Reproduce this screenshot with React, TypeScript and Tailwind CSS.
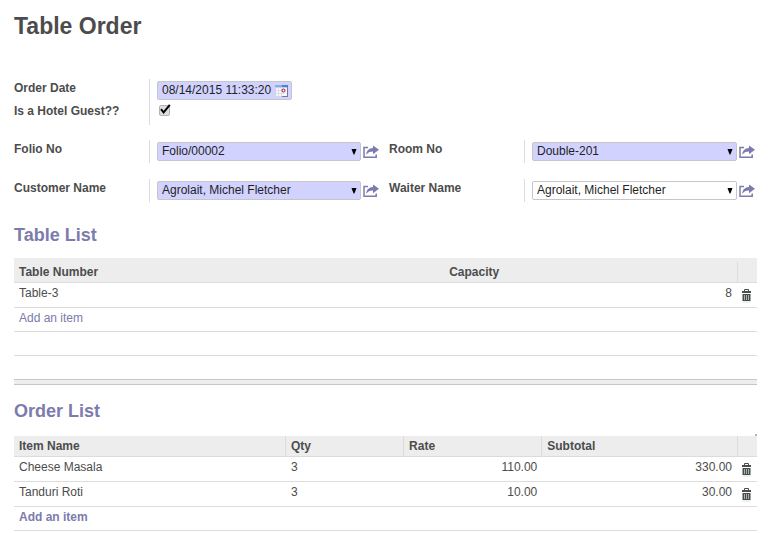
import { useState } from "react";
import type { ReactNode } from "react";

function ShareIcon() {
  return (
    <svg viewBox="0 0 16 13" className="block h-[13px] w-4" aria-hidden="true">
      <path d="M5 2.6H1v9.6h12.2V9.6" fill="none" stroke="#7c7bad" strokeWidth="1.5" />
      <path d="M3.2 9.8C3.6 5.6 5.8 3.2 10 3V.5L16 4.8 10 9.2V6.4C6.8 6.4 4.8 7.6 3.2 9.8z" fill="#7c7bad" />
    </svg>
  );
}

function TrashIcon() {
  return (
    <svg viewBox="0 0 9 12" className="block h-3 w-[9px]" aria-hidden="true">
      <path d="M2.5 2V.5h4V2" fill="none" stroke="#4c4c4c" />
      <path d="M0 2h9v2H0z" fill="#4c4c4c" />
      <path d="M.5 5h8v7h-8z" fill="#4c4c4c" />
      <path d="M2.5 6v5M4.5 6v5M6.5 6v5" stroke="#9fb4b8" />
    </svg>
  );
}

function CalendarIcon() {
  return (
    <svg viewBox="0 0 13 12" className="block h-3 w-[13px]" aria-hidden="true">
      <path d="M0 0h13v12H0z" fill="#f6f7fa" />
      <path d="M.5 3v8.5H12" fill="none" stroke="#d3d5de" />
      <path d="M3.5 3v8M6.5 3v8M1 5.5h8M1 8.5h8" stroke="#dddfe6" />
      <path d="M0 0h13v2.5H0z" fill="#86aeea" />
      <path d="M7 0h6v2H7z" fill="#4a80d8" />
      <path d="M12.5 2v10M7 11.5h6" stroke="#6c7ca6" />
      <circle cx="8.5" cy="5.5" r="1.5" fill="#fff" stroke="#c4303c" strokeWidth="1.1" />
    </svg>
  );
}

function Field({ id, label, children }: { id: string; label: string; children: ReactNode }) {
  return (
    <div className="flex h-[23px]">
      <label htmlFor={id} className="w-[135px] shrink-0 pt-px font-bold">
        {label}
      </label>
      <div className="flex min-w-0 flex-1 items-start border-l border-[#dcdcdc] pt-0.5 pl-[7px]">{children}</div>
    </div>
  );
}

function SelectField({ id, label, value, required = false }: { id: string; label: string; value: string; required?: boolean }) {
  return (
    <Field id={id} label={label}>
      <div className="relative min-w-0 flex-1">
        <select
          id={id}
          className={`block h-[19px] w-full appearance-none rounded-xs border border-[#c6c6c6] px-1 pb-0.5 leading-4 text-[#1f1f1f] ${
            required ? "bg-[#d2d2ff]" : "bg-white"
          }`}
        >
          <option>{value}</option>
        </select>
        <svg viewBox="0 0 6 6" className="pointer-events-none absolute top-[7px] right-1 size-1.5" aria-hidden="true">
          <path d="M.5 0h5L3.4 5.5h-.8z" fill="#000" />
        </svg>
      </div>
      <button type="button" aria-label={`Open ${label}`} className="ml-0.5 pt-[3px]">
        <ShareIcon />
      </button>
    </Field>
  );
}

function DeleteCell() {
  return (
    <td className="border-b border-[#dcdcdc] pt-1.5 pl-[5px] align-top">
      <button type="button" aria-label="Delete" className="block rounded-xs shadow-[0_2px_1px_#eeeeee]">
        <TrashIcon />
      </button>
    </td>
  );
}

const cell = "border-b border-[#dcdcdc] px-[5px] pt-0.5 align-top";
const head = "border-b border-[#dcdcdc] bg-[#ededed] px-[5px] text-left align-top font-bold";
const heading = "text-lg leading-6 font-bold text-[#7c7bad]";

const orders = [
  { item: "Cheese Masala", qty: 3, rate: "110.00", subtotal: "330.00" },
  { item: "Tanduri Roti", qty: 3, rate: "10.00", subtotal: "30.00" },
];

export default function App() {
  const [date, setDate] = useState("08/14/2015 11:33:20");
  const [guest, setGuest] = useState(true);

  return (
    <main className="bg-white pt-3 pr-[15px] pl-3.5 font-['Liberation_Sans',Arial,sans-serif] text-xs leading-4 text-[#4c4c4c]">
      <h1 className="text-[23px] leading-7 font-bold">Table Order</h1>

      <form className="mt-[39px] pr-0.5">
        <Field id="order-date" label="Order Date">
          <div className="flex h-[19px] w-[135px] items-center rounded-xs border border-[#c6c6c6] bg-[#d2d2ff] pr-[3px] pl-1">
            <input
              id="order-date"
              type="text"
              value={date}
              onChange={(e) => setDate(e.target.value)}
              className="min-w-0 flex-1 bg-transparent pb-0.5 leading-4 text-[#1f1f1f] outline-none"
            />
            <button type="button" aria-label="Choose date">
              <CalendarIcon />
            </button>
          </div>
        </Field>
        <Field id="hotel-guest" label="Is a Hotel Guest??">
          <div className="relative mt-px ml-0.5 size-[11px]">
            <input
              id="hotel-guest"
              type="checkbox"
              checked={guest}
              onChange={(e) => setGuest(e.target.checked)}
              className="block size-[11px] appearance-none rounded-xs border border-[#b4b4b4] bg-[#dedede]"
            />
            {guest && (
              <svg viewBox="0 0 12 12" className="pointer-events-none absolute -top-px left-0 size-3" aria-hidden="true">
                <path d="M2 5.2L4.6 8.4 10.8.8" fill="none" stroke="#000" strokeWidth="1.9" />
              </svg>
            )}
          </div>
        </Field>

        <div className="mt-[15px] grid grid-cols-[365fr_366fr] gap-x-2.5 gap-y-4">
          <SelectField id="folio" label="Folio No" value="Folio/00002" required />
          <SelectField id="room" label="Room No" value="Double-201" required />
          <SelectField id="customer" label="Customer Name" value="Agrolait, Michel Fletcher" required />
          <SelectField id="waiter" label="Waiter Name" value="Agrolait, Michel Fletcher" />
        </div>
      </form>

      <section className="mt-[21px]">
        <h2 className={heading}>Table List</h2>
        <table className="mt-[11px] w-full table-fixed border-separate border-spacing-0">
          <colgroup>
            <col className="w-[57.9%]" />
            <col />
            <col className="w-5" />
          </colgroup>
          <thead>
            <tr className="h-[25px]">
              <th className={`${head} pt-1.5`}>Table Number</th>
              <th className={`${head} pt-1.5`}>Capacity</th>
              <th className="border-b border-[#dcdcdc] bg-[#ededed] p-0 pt-1">
                <div className="h-5 border-l border-[#dcdcdc]" />
              </th>
            </tr>
          </thead>
          <tbody>
            <tr className="h-[25px]">
              <td className={cell}>Table-3</td>
              <td className={`${cell} text-right`}>8</td>
              <DeleteCell />
            </tr>
            <tr className="h-6">
              <td colSpan={3} className={cell}>
                <button type="button" className="block text-[#7c7bad]">Add an item</button>
              </td>
            </tr>
            <tr className="h-6">
              <td colSpan={3} className={cell} />
            </tr>
            <tr className="h-[23px]">
              <td colSpan={3} />
            </tr>
          </tbody>
          <tfoot>
            <tr className="h-1.5">
              <td colSpan={3} className="border-y border-[#c6c6c6] bg-[#ededed] p-0" />
            </tr>
          </tfoot>
        </table>
      </section>

      <section className="mt-3.5">
        <h2 className={heading}>Order List</h2>
        <div className="flex h-[13px] items-end justify-end">
          <span className="size-0.5 bg-[#b4b4b4]" />
        </div>
        <table className="w-full table-fixed border-separate border-spacing-0">
          <colgroup>
            <col className="w-[36.6%]" />
            <col className="w-[15.9%]" />
            <col className="w-[18.6%]" />
            <col />
            <col className="w-5" />
          </colgroup>
          <thead>
            <tr className="h-[21px]">
              <th className={`${head} border-r pt-0.5`}>Item Name</th>
              <th className={`${head} border-r pt-0.5`}>Qty</th>
              <th className={`${head} border-r pt-0.5`}>Rate</th>
              <th className={`${head} pt-0.5`}>Subtotal</th>
              <th className={`${head} border-l`} />
            </tr>
          </thead>
          <tbody>
            {orders.map((o) => (
              <tr key={o.item} className="h-[25px]">
                <td className={cell}>{o.item}</td>
                <td className={cell}>{o.qty}</td>
                <td className={`${cell} text-right`}>{o.rate}</td>
                <td className={`${cell} text-right`}>{o.subtotal}</td>
                <DeleteCell />
              </tr>
            ))}
            <tr className="h-6">
              <td colSpan={5} className={cell}>
                <button type="button" className="block font-bold text-[#7c7bad]">Add an item</button>
              </td>
            </tr>
          </tbody>
        </table>
      </section>
    </main>
  );
}
